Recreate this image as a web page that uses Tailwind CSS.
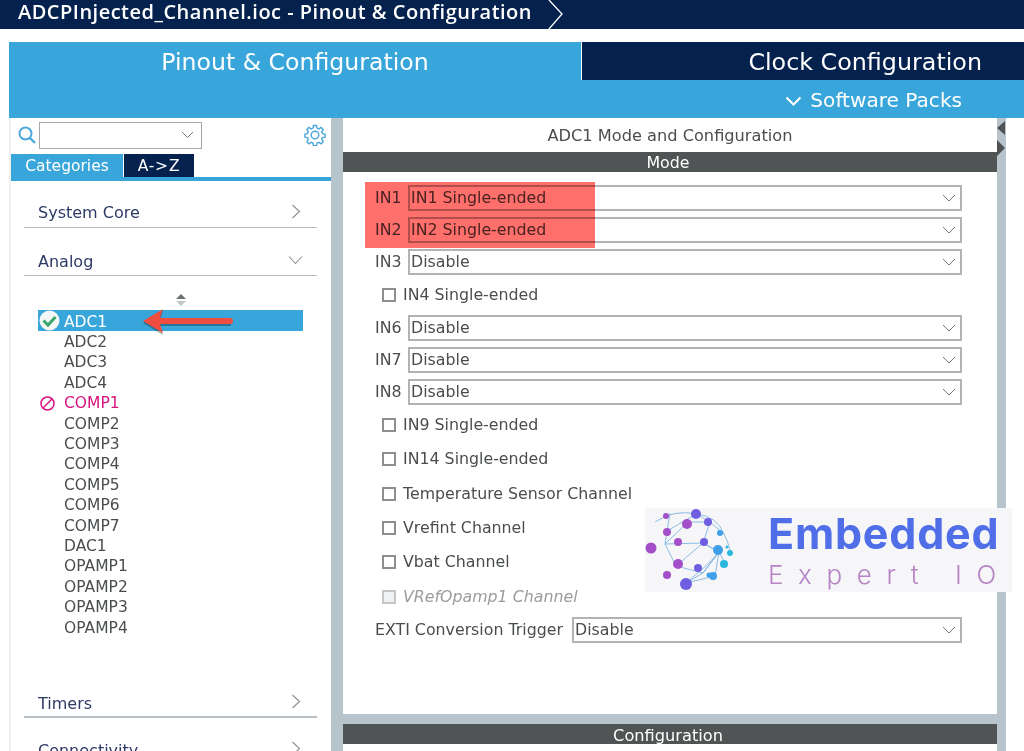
<!DOCTYPE html>
<html lang="en">
<head>
    <meta charset="UTF-8">
    <title>ADCPInjected_Channel.ioc - Pinout & Configuration</title>
    <script src="https://cdn.jsdelivr.net/npm/@tailwindcss/browser@4"></script>
</head>
<body class="bg-white font-['DejaVu_Sans','Noto_Sans',sans-serif] w-[1024px] h-[751px] overflow-hidden relative text-[#4a4d4f]">

    <!-- breadcrumb -->
    <div class="h-[29px] bg-[#04224d] flex items-center pl-[18px] text-white font-semibold">
        <span class="font-['Open_Sans'] text-[20px] tracking-[0.49px] whitespace-nowrap pb-[5px]">ADCPInjected_Channel.ioc - Pinout &amp; Configuration</span>
        <svg class="ml-[14px]" width="20" height="29" viewBox="0 0 20 29" fill="none"><path d="M3 0l13 14L3 29" stroke="#fff" stroke-width="1.3"/></svg>
    </div>

    <!-- top tabs -->
    <div class="ml-[9px] mt-[13px] h-[76px] bg-[#39a6db] text-white">
        <div class="flex h-[38px]">
            <div class="w-[572px] flex items-center justify-center text-[23.6px] pt-[4px]">Pinout &amp; Configuration</div>
            <div class="flex-1 bg-[#04224d] border-l border-white flex items-center justify-end pr-[42px] text-[23.8px] pt-[4px]">Clock Configuration</div>
        </div>
        <div class="h-[38px] flex items-center justify-end pr-[62px] text-[20.1px] pt-[3px]">
            <svg class="mr-[8px]" width="17" height="10" viewBox="0 0 17 10" fill="none"><path d="M1.5 1.5l7 7 7-7" stroke="#fff" stroke-width="2"/></svg>
            Software Packs
        </div>
    </div>

    <div class="flex ml-[9px] h-[633px]">
        <!-- left panel -->
        <div class="w-[322px] border-l-2 border-[#eef0f1] flex flex-col text-[15px] overflow-hidden">
            <div class="flex items-center h-[34px] shrink-0 pl-[6px] pr-[5px]">
                <svg width="20" height="20" viewBox="0 0 20 20" fill="none"><circle cx="8.5" cy="8.5" r="6" stroke="#4ba8dc" stroke-width="2"/><path d="M13 13l5 5" stroke="#4ba8dc" stroke-width="2.4"/></svg>
                <div class="ml-[2px] w-[163px] h-[27px] bg-white border border-[#a5a8aa] flex items-center justify-end pr-[7px]">
                    <svg width="13" height="8" viewBox="0 0 13 8" fill="none"><path d="M1 1l5.5 5.5L12 1" stroke="#777" stroke-width="1"/></svg>
                </div>
                <svg class="ml-auto" width="22" height="22" viewBox="0 0 22 22" fill="none"><path d="M9.5 1.5h3l.5 2.6 1.9.8 2.2-1.5 2.1 2.1-1.5 2.2.8 1.9 2.6.5v3l-2.6.5-.8 1.9 1.5 2.2-2.1 2.1-2.2-1.5-1.9.8-.5 2.6h-3l-.5-2.6-1.9-.8-2.2 1.5-2.1-2.1 1.5-2.2-.8-1.9-2.6-.5v-3l2.6-.5.8-1.9-1.5-2.2 2.1-2.1 2.2 1.5 1.9-.8z" stroke="#4ba8dc" stroke-width="1.4"/><circle cx="11" cy="11" r="3.8" stroke="#4ba8dc" stroke-width="1.4"/></svg>
            </div>
            <div class="flex h-[23px] shrink-0 mt-[2px] border-b-[4px] border-[#39a6db] box-content text-[15.5px]">
                <div class="w-[113px] bg-[#39a6db] text-white flex items-center justify-center border-r border-white pt-[2px]">Categories</div>
                <div class="w-[70px] bg-[#04224d] text-white flex items-center justify-center pt-[2px] tracking-[0.8px]">A-&gt;Z</div>
            </div>

            <div class="relative ml-[13px] mr-[14px] mt-[18px] flex flex-col shrink-0">
                <div class="h-[29px] shrink-0 border-b border-[#b5bcc4] flex items-center justify-between text-[#2d3a66] text-[16px] pl-[14px] pr-[16px]">
                    System Core
                    <svg width="10" height="15" viewBox="0 0 10 15" fill="none" class="mb-1"><path d="M1.5 1l7 6.5-7 6.5" stroke="#8a8f93" stroke-width="1.1"/></svg>
                </div>
                <div class="mt-[18px] h-[30px] shrink-0 border-b border-[#b5bcc4] flex items-center justify-between text-[#2d3a66] text-[16px] pl-[14px] pr-[14px] pt-[3px]">
                    Analog
                    <svg width="15" height="10" viewBox="0 0 15 10" fill="none" class="mb-1"><path d="M1 1.5l6.5 7 6.5-7" stroke="#8a8f93" stroke-width="1.1"/></svg>
                </div>
                <div class="h-[34px] shrink-0 flex flex-col items-center justify-end pb-[4px] pl-[20px] gap-[2px]">
                    <div class="w-0 h-0 border-x-[5px] border-x-transparent border-b-[5px] border-b-[#6d7173]"></div>
                    <div class="w-0 h-0 border-x-[5px] border-x-transparent border-t-[5px] border-t-[#c4c8c8]"></div>
                </div>
                <div class="ml-[14px] text-[15.5px] leading-[20.4px] shrink-0">
                    <div class="w-[265px] h-[21px] bg-[#39a6db] text-white flex items-center">
                        <svg class="ml-[1px] mr-[4px]" width="21" height="21" viewBox="0 0 21 21" fill="none"><circle cx="10.5" cy="10.5" r="10" fill="#f4f7f5"/><path d="M4.5 10.5l4.5 4.5 7.5-8" stroke="#3aa76d" stroke-width="3"/></svg>
                        <span class="pt-[3px]">ADC1</span>
                    </div>
                    <div class="pl-[26px] pt-[1px]">
                        <div>ADC2</div>
                        <div>ADC3</div>
                        <div>ADC4</div>
                        <div class="relative text-[#d6127f]">
                            <svg class="absolute left-[-24px] top-[3px]" width="15" height="15" viewBox="0 0 15 15" fill="none"><circle cx="7.5" cy="7.5" r="6.5" stroke="#d6127f" stroke-width="1.5"/><path d="M3 12l9-9" stroke="#d6127f" stroke-width="1.5"/></svg>
                            COMP1
                        </div>
                        <div>COMP2</div>
                        <div>COMP3</div>
                        <div>COMP4</div>
                        <div>COMP5</div>
                        <div>COMP6</div>
                        <div>COMP7</div>
                        <div>DAC1</div>
                        <div>OPAMP1</div>
                        <div>OPAMP2</div>
                        <div>OPAMP3</div>
                        <div>OPAMP4</div>
                    </div>
                </div>
                <div class="mt-[51px] h-[29px] shrink-0 border-b-2 border-[#b5bcc4] flex items-center justify-between text-[#2d3a66] text-[16px] pl-[14px] pr-[16px] pt-[2px]">
                    Timers
                    <svg width="10" height="15" viewBox="0 0 10 15" fill="none" class="mb-1"><path d="M1.5 1l7 6.5-7 6.5" stroke="#8a8f93" stroke-width="1.1"/></svg>
                </div>
                <div class="mt-[18px] h-[29px] shrink-0 flex items-center justify-between text-[#2d3a66] text-[16px] pl-[14px] pr-[16px]">
                    Connectivity
                    <svg width="10" height="15" viewBox="0 0 10 15" fill="none" class="mb-1"><path d="M1.5 1l7 6.5-7 6.5" stroke="#8a8f93" stroke-width="1.1"/></svg>
                </div>
            </div>
        </div>

        <!-- divider -->
        <div class="w-[12px] bg-[#b8c4cc]"></div>

        <!-- right panel -->
        <div class="w-[654px] flex flex-col text-[15.8px]">
            <div class="h-[34px] shrink-0 flex items-center justify-center text-[16.2px] pt-[3px]">ADC1 Mode and Configuration</div>
            <div class="h-[20px] shrink-0 bg-[#515454] text-white flex items-center justify-center pr-[4px] pt-[1px]">Mode</div>

            <div class="h-[542px] shrink-0 pt-[13px] pl-[32px] flex flex-col">
                <div class="flex items-center h-[26px]"><span class="w-[33px]">IN1</span><div class="w-[554px] h-[26px] border-2 border-[#b1b3b5] flex items-center justify-between pl-[1px] pr-[4px]">IN1 Single-ended<svg width="14" height="8" viewBox="0 0 14 8" fill="none"><path d="M1 1l6 6 6-6" stroke="#777" stroke-width="1"/></svg></div></div>
                <div class="flex items-center h-[26px] mt-[6px]"><span class="w-[33px]">IN2</span><div class="w-[554px] h-[26px] border-2 border-[#b1b3b5] flex items-center justify-between pl-[1px] pr-[4px]">IN2 Single-ended<svg width="14" height="8" viewBox="0 0 14 8" fill="none"><path d="M1 1l6 6 6-6" stroke="#777" stroke-width="1"/></svg></div></div>
                <div class="flex items-center h-[26px] mt-[6px]"><span class="w-[33px]">IN3</span><div class="w-[554px] h-[26px] border-2 border-[#b1b3b5] flex items-center justify-between pl-[1px] pr-[4px]">Disable<svg width="14" height="8" viewBox="0 0 14 8" fill="none"><path d="M1 1l6 6 6-6" stroke="#777" stroke-width="1"/></svg></div></div>
                <div class="flex items-center h-[34px] mt-[3px] pl-[7px]"><span class="w-[14px] h-[14px] border-2 border-[#8c8f91] mr-[7px]"></span>IN4 Single-ended</div>
                <div class="flex items-center h-[26px] mt-[3px]"><span class="w-[33px]">IN6</span><div class="w-[554px] h-[26px] border-2 border-[#b1b3b5] flex items-center justify-between pl-[1px] pr-[4px]">Disable<svg width="14" height="8" viewBox="0 0 14 8" fill="none"><path d="M1 1l6 6 6-6" stroke="#777" stroke-width="1"/></svg></div></div>
                <div class="flex items-center h-[26px] mt-[6px]"><span class="w-[33px]">IN7</span><div class="w-[554px] h-[26px] border-2 border-[#b1b3b5] flex items-center justify-between pl-[1px] pr-[4px]">Disable<svg width="14" height="8" viewBox="0 0 14 8" fill="none"><path d="M1 1l6 6 6-6" stroke="#777" stroke-width="1"/></svg></div></div>
                <div class="flex items-center h-[26px] mt-[6px]"><span class="w-[33px]">IN8</span><div class="w-[554px] h-[26px] border-2 border-[#b1b3b5] flex items-center justify-between pl-[1px] pr-[4px]">Disable<svg width="14" height="8" viewBox="0 0 14 8" fill="none"><path d="M1 1l6 6 6-6" stroke="#777" stroke-width="1"/></svg></div></div>
                <div class="flex items-center h-[34px] mt-[3px] pl-[7px]"><span class="w-[14px] h-[14px] border-2 border-[#8c8f91] mr-[7px]"></span>IN9 Single-ended</div>
                <div class="flex items-center h-[34px] pl-[7px]"><span class="w-[14px] h-[14px] border-2 border-[#8c8f91] mr-[7px]"></span>IN14 Single-ended</div>
                <div class="flex items-center h-[34px] mt-[1px] pl-[7px]"><span class="w-[14px] h-[14px] border-2 border-[#8c8f91] mr-[7px]"></span>Temperature Sensor Channel</div>
                <div class="flex items-center h-[34px] pl-[7px]"><span class="w-[14px] h-[14px] border-2 border-[#8c8f91] mr-[7px]"></span>Vrefint Channel</div>
                <div class="flex items-center h-[34px] pl-[7px]"><span class="w-[14px] h-[14px] border-2 border-[#8c8f91] mr-[7px]"></span>Vbat Channel</div>
                <div class="flex items-center h-[34px] mt-[1px] pl-[7px] italic text-[#9a9c9e]"><span class="w-[14px] h-[14px] border-2 border-[#c4c6c8] bg-[#f0f1f2] mr-[7px]"></span>VRefOpamp1 Channel</div>
                <div class="flex items-center h-[26px] mt-[3px]"><span class="w-[197px] whitespace-nowrap">EXTI Conversion Trigger</span><div class="w-[390px] h-[26px] border-2 border-[#b1b3b5] flex items-center justify-between pl-[1px] pr-[4px]">Disable<svg width="14" height="8" viewBox="0 0 14 8" fill="none"><path d="M1 1l6 6 6-6" stroke="#777" stroke-width="1"/></svg></div></div>
            </div>

            <div class="h-[10px] shrink-0 bg-[#b8c4cc]"></div>
            <div class="h-[20px] shrink-0 bg-[#515454] text-white flex items-center justify-center pr-[4px] pt-[4px] text-[16.2px]">Configuration</div>
        </div>

        <!-- side scrollbar -->
        <div class="w-[9px] bg-[#b8c4cc] relative">
            <div class="absolute left-0 top-[3px] w-0 h-0 border-y-[7px] border-y-transparent border-r-[8px] border-r-[#4e5254]"></div>
            <div class="absolute left-0 top-[22px] w-0 h-0 border-y-[8px] border-y-transparent border-l-[8px] border-l-[#4e5254]"></div>
        </div>
    </div>

    <!-- red highlight drawn over the first two inputs -->
    <div class="absolute left-[365px] top-[182px] w-[230px] h-[66px] bg-[#ff6f6b] mix-blend-multiply"></div>

    <!-- arrow annotation -->
    <svg class="absolute left-[140px] top-[304px]" width="96" height="34" viewBox="0 0 96 34" fill="none">
        <path d="M3 17L23 5L20 14H91V20H20L23 29z" fill="#000" fill-opacity=".3" transform="translate(0 2)"/>
        <path d="M3 17L23 5L20 14H90a3 3 0 0 1 0 6H20L23 29z" fill="#ee4d40"/>
    </svg>

    <!-- watermark logo -->
    <div class="absolute left-[645px] top-[508px] w-[367px] h-[84px] bg-[#f6f6f8] flex">
        <svg width="90" height="84" viewBox="0 0 90 84" fill="none" class="shrink-0">
            <g stroke="#7fb5e0" stroke-width=".9">
                <path d="M10 14Q30 1 51 6Q72 8 79 26Q86 40 84 44M22 23L51 6L65 14L79 26M20 36L43 14L65 14L58 35L74 44M31 58L20 36L25 5M31 58L58 65L74 44L58 35L20 36M31 58L58 35M41 75L58 65L74 44L80 55M41 75L70 68L74 44M41 75L63 56L74 44"/>
            </g>
            <g fill="#a24fc9">
                <circle cx="6" cy="40" r="5.5"/><circle cx="21" cy="8" r="3"/><circle cx="22" cy="24" r="4"/><circle cx="22" cy="67" r="4"/><circle cx="33" cy="56" r="5"/><circle cx="33" cy="34" r="4"/><circle cx="42" cy="16" r="5"/>
            </g>
            <g fill="#6f5ee0">
                <circle cx="51" cy="6" r="5"/><circle cx="41" cy="76" r="6"/><circle cx="53" cy="60" r="4"/><circle cx="59" cy="34" r="4"/><circle cx="63" cy="14" r="4"/>
            </g>
            <g fill="#3f9fe8">
                <circle cx="73" cy="42" r="5"/><circle cx="68" cy="68" r="4"/><circle cx="64" cy="67" r="2.5"/><circle cx="75" cy="25" r="3"/>
            </g>
            <g fill="#2bb8dc">
                <circle cx="79" cy="56" r="4"/><circle cx="85" cy="45" r="3"/><circle cx="82" cy="39" r="1.5"/>
            </g>
        </svg>
        <div class="ml-[33px] flex flex-col font-['Inter']">
            <div class="text-[43px] font-bold leading-[40px] mt-[5px] tracking-[0.8px] text-[#4f6ee8]">Embedded</div>
            <div class="text-[26px] leading-[30px] mt-[7px] tracking-[14.6px] font-light text-[#b583c6] whitespace-nowrap">Expert IO</div>
        </div>
    </div>

</body>
</html>
